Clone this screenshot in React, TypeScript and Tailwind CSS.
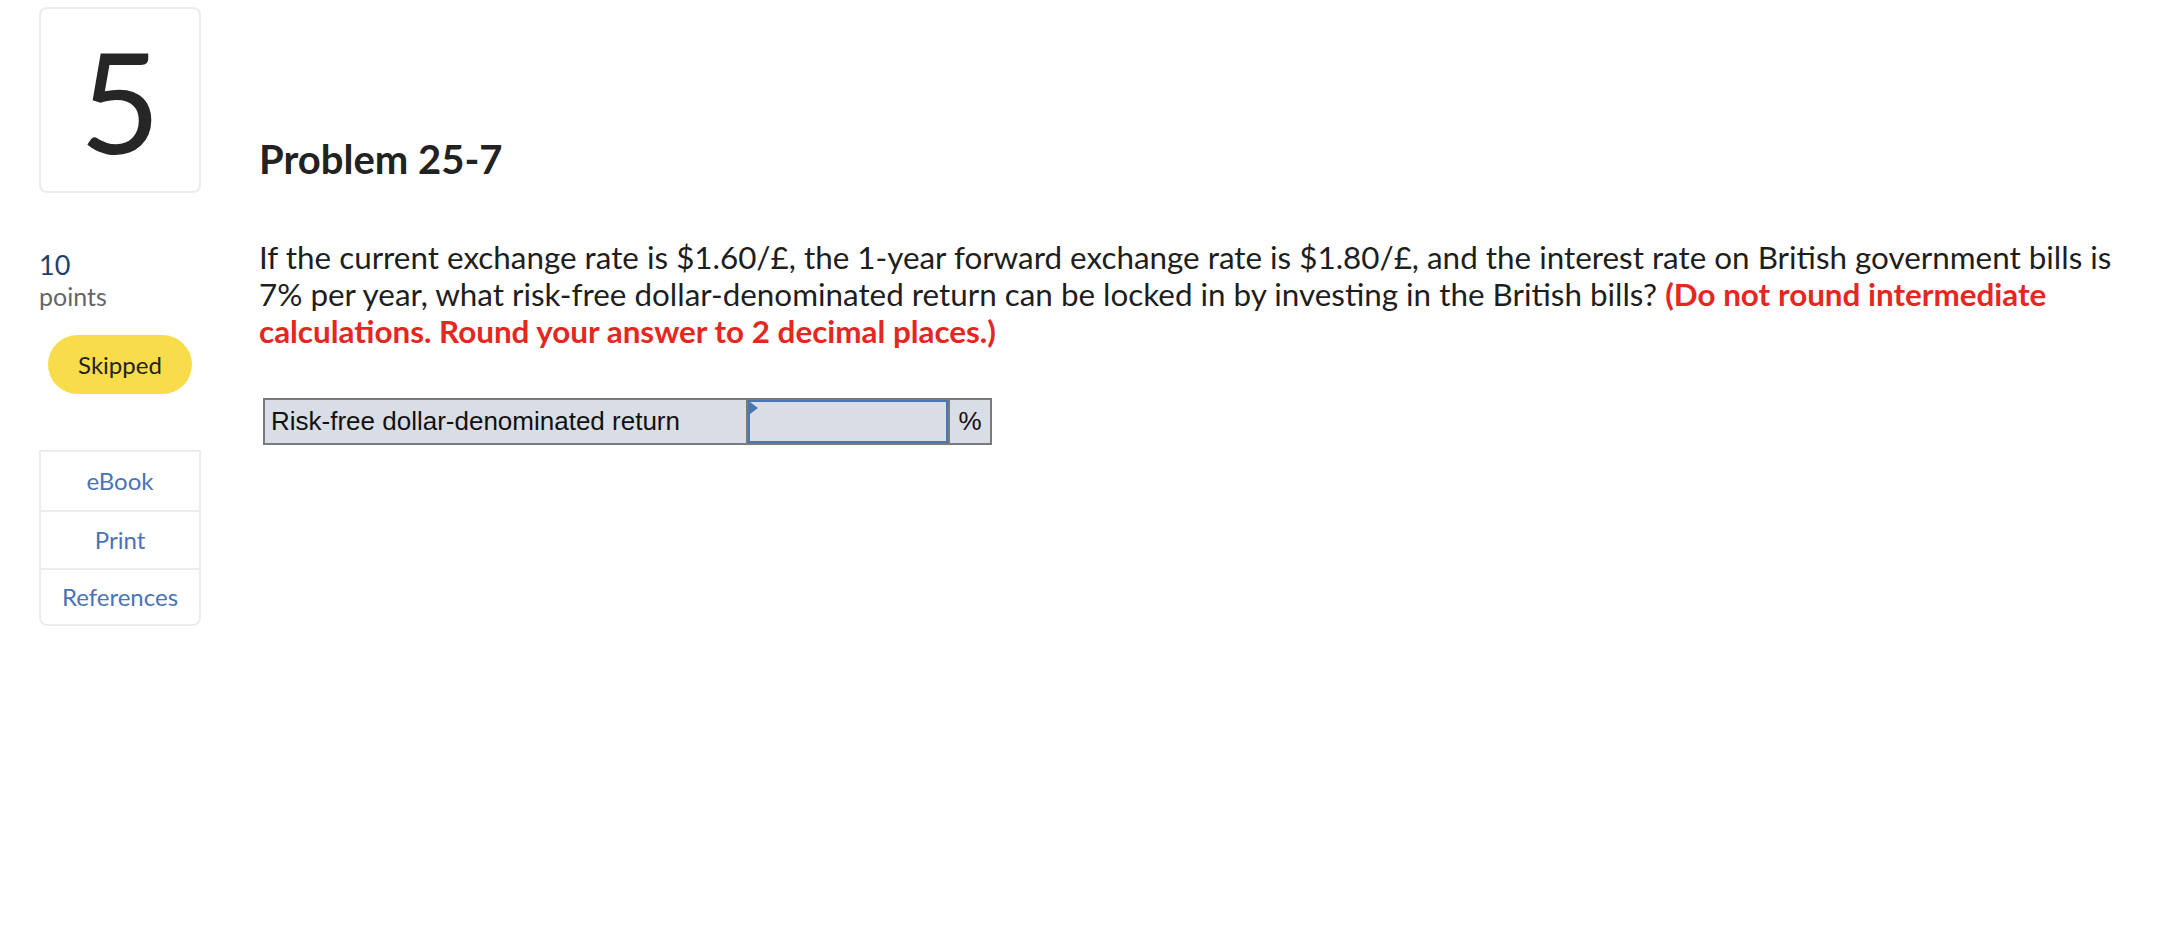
export default function App() {
  const font = { fontFamily: "Lato, 'Noto Sans', sans-serif" };

  return (
    <div className="min-h-screen w-full bg-white text-[#222]" style={font}>
      <div className="grid grid-cols-[162px_1fr] gap-x-[58px] pl-[39px] pt-[7px]">
        {/* question number */}
        <div className="flex h-[186px] items-center justify-center rounded-lg border-2 border-[#ececec] bg-white">
          <span className="text-[140px] leading-none text-[#262626]">5</span>
        </div>

        {/* title */}
        <div className="flex items-end pb-[14px]">
          <h1 className="text-[40px] font-bold leading-none text-[#222]">Problem 25-7</h1>
        </div>

        {/* left column */}
        <div className="flex flex-col pt-[56px]">
          <div className="text-[27px] leading-[32px] text-[#1f3f6f]">10</div>
          <div className="text-[25px] leading-[30px] text-[#666]">points</div>

          <div className="ml-[9px] mt-[24px] flex h-[59px] w-[144px] items-center justify-center rounded-full bg-[#f9dc4a] text-[24px] text-[#222]">
            Skipped
          </div>

          <div className="mt-[56px] flex flex-col rounded-b-lg border-2 border-[#ececec] text-[24px] text-[#4a74b5]">
            <div className="flex h-[60px] items-center justify-center border-b-2 border-[#ececec]">eBook</div>
            <div className="flex h-[58px] items-center justify-center border-b-2 border-[#ececec]">Print</div>
            <div className="flex h-[54px] items-center justify-center">References</div>
          </div>
        </div>

        {/* question body */}
        <div className="w-[1885px] pt-[46px]">
          <p className="text-[31.4px] leading-[37px] text-[#1e1e1e]">
            If the current exchange rate is $1.60/£, the 1-year forward exchange rate is $1.80/£, and the interest
            rate on British government bills is 7% per year, what risk-free dollar-denominated return can be locked
            in by investing in the British bills?{" "}
            <span className="font-bold text-[#e5271f]">
              (Do not round intermediate calculations. Round your answer to 2 decimal places.)
            </span>
          </p>

          <div
            className="ml-[4px] mt-[48px] flex h-[47px] w-[729px] border-2 border-[#7a7a7a] bg-[#d9dde6] text-[26px] text-[#111]"
            style={{ fontFamily: "'Liberation Sans', Arial, sans-serif" }}
          >
            <div className="flex w-[483px] items-center border-r-2 border-[#7a7a7a] pl-[6px]">
              Risk-free dollar-denominated return
            </div>
            <div className="relative w-[200px] border-2 border-[#4a77b4] bg-[#d9dde6]">
              <span className="absolute left-0 top-0 h-0 w-0 border-y-[6px] border-l-[8px] border-y-transparent border-l-[#4a77b4]" />
            </div>
            <div className="flex flex-1 items-center justify-center border-l-2 border-[#7a7a7a]">%</div>
          </div>
        </div>
      </div>
    </div>
  );
}
